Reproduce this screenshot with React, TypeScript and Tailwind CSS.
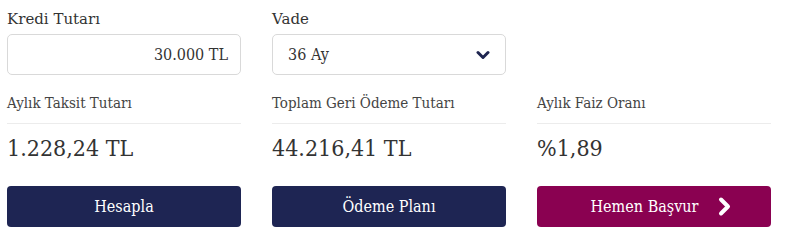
import React from "react";

const font = { fontFamily: '"DejaVu Serif Condensed", "DejaVu Serif", serif' };
const wide = { fontFamily: '"DejaVu Serif", serif' };

const ResultItem = ({ label, value }: { label: string; value: string }) => (
  <div className="flex flex-col">
    <div className="h-[39px] border-b border-[#ececec] pt-[8px] text-[15px] leading-[20px] text-[#444]">
      {label}
    </div>
    <div className="pt-[10px] text-[23px] leading-[28px] text-[#333]">{value}</div>
  </div>
);

export default function App() {
  return (
    <div className="w-[789px] h-[243px] bg-white px-[7px]" style={font}>
      <div className="grid grid-cols-3 gap-x-[31px] w-[764px]">
        {/* Kredi tutarı */}
        <div className="flex flex-col">
          <label className="pt-[9px] text-[15px] leading-[20px] text-[#333]" style={wide}>
            Kredi Tutarı
          </label>
          <div className="mt-[5px] h-[41px] rounded-[5px] border border-[#d9d9d9] flex items-center justify-end pr-[12px] text-[16px] text-[#333]">
            30.000 TL
          </div>
        </div>

        {/* Vade */}
        <div className="flex flex-col">
          <label className="pt-[9px] text-[15px] leading-[20px] text-[#333]" style={wide}>
            Vade
          </label>
          <div className="mt-[5px] h-[41px] rounded-[5px] border border-[#d9d9d9] flex items-center justify-between pl-[15px] pr-[15px] text-[16px] text-[#333]">
            <span>36 Ay</span>
            <svg width="14" height="10" viewBox="0 0 14 10">
              <path d="M2 2.5 L7 7.5 L12 2.5" fill="none" stroke="#1e2550" strokeWidth="3" strokeLinecap="round" strokeLinejoin="round" />
            </svg>
          </div>
        </div>
        <div />

        <div className="col-span-3 grid grid-cols-3 gap-x-[31px] mt-[10px]">
          <ResultItem label="Aylık Taksit Tutarı" value="1.228,24 TL" />
          <ResultItem label="Toplam Geri Ödeme Tutarı" value="44.216,41 TL" />
          <ResultItem label="Aylık Faiz Oranı" value="%1,89" />
        </div>

        <div className="col-span-3 grid grid-cols-3 gap-x-[31px] mt-[24px]">
          <button className="h-[41px] rounded-[4px] bg-[#1e2553] text-white text-[16px]" style={font}>
            Hesapla
          </button>
          <button className="h-[41px] rounded-[4px] bg-[#1e2553] text-white text-[16px]" style={font}>
            Ödeme Planı
          </button>
          <button className="relative h-[41px] rounded-[4px] bg-[#8a0151] text-white text-[16px] pr-[19px]" style={font}>
            <span>Hemen Başvur</span>
            <svg className="absolute left-[180px] top-[10px]" width="16" height="21" viewBox="0 0 16 21">
              <path d="M4 3.5 L11 10.5 L4 17.5" fill="none" stroke="#fff" strokeWidth="4" strokeLinecap="round" strokeLinejoin="round" />
            </svg>
          </button>
        </div>
      </div>
    </div>
  );
}
